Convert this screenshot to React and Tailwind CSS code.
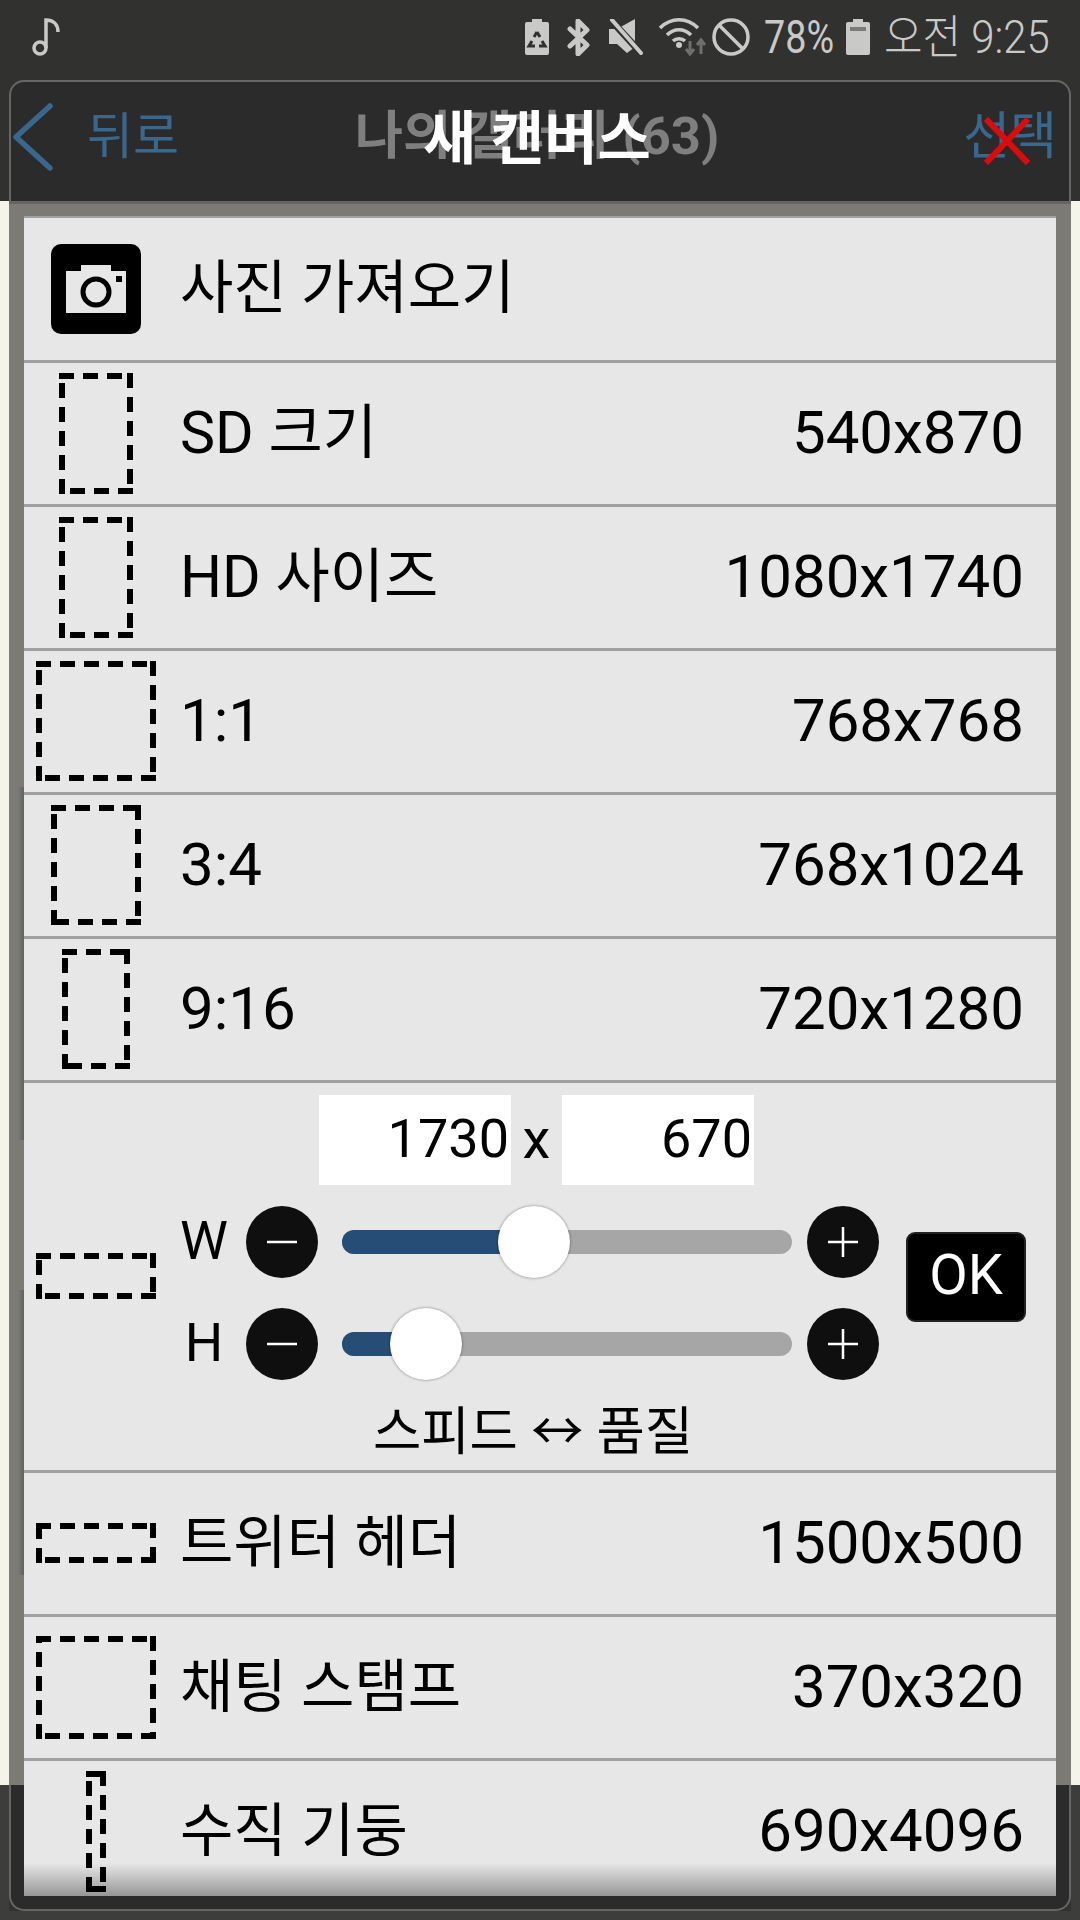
const rows = [
  { label: "SD 크기", size: "540x870", w: 74, h: 121, labelSize: "text-[59px]" },
  { label: "HD 사이즈", size: "1080x1740", w: 74, h: 121, labelSize: "text-[59px]" },
  { label: "1:1", size: "768x768", w: 120, h: 120, labelSize: "text-[60px]" },
  { label: "3:4", size: "768x1024", w: 90, h: 120, labelSize: "text-[60px]" },
  { label: "9:16", size: "720x1280", w: 68, h: 120, labelSize: "text-[60px]" },
];

const lowerRows = [
  { label: "트위터 헤더", size: "1500x500", w: 120, h: 40, labelSize: "text-[58px]" },
  { label: "채팅 스탬프", size: "370x320", w: 120, h: 103, labelSize: "text-[58px]" },
  { label: "수직 기둥", size: "690x4096", w: 20, h: 121, labelSize: "text-[58px]" },
];

// each side restarts its dashes from its own corner
function DashIcon({ w, h }) {
  return (
    <svg
      width={w}
      height={h}
      viewBox={`0 0 ${w} ${h}`}
      fill="none"
      stroke="#000"
      strokeWidth="6"
      strokeDasharray="15 9"
      shapeRendering="crispEdges"
      style={{ marginBottom: h % 2 === 0 ? 1 : 0 }}
    >
      <path d={`M0 3H${w}`} />
      <path d={`M${w - 3} 0V${h}`} />
      <path d={`M${w} ${h - 3}H0`} />
      <path d={`M3 ${h}V0`} />
    </svg>
  );
}

function CameraIcon() {
  return (
    <svg width="90" height="90" viewBox="0 0 90 90">
      <rect width="90" height="90" rx="10" fill="#000" />
      <path d="M15 27H30V21H60V27H75V69H15Z" fill="#e7e7e7" />
      <circle cx="45" cy="48" r="13" fill="none" stroke="#000" strokeWidth="5" />
      <rect x="65" y="32" width="6" height="6" fill="#000" />
    </svg>
  );
}

function SizeRow({ label, size, w, h, labelSize }) {
  return (
    <div className="flex h-[144px] shrink-0 items-center border-b-[3px] border-[#a1a1a1]">
      <div className="flex w-[144px] shrink-0 justify-center">
        <DashIcon w={w} h={h} />
      </div>
      <span className={`ml-[12px] pb-[2px] leading-none text-black ${labelSize}`}>{label}</span>
      <span className="ml-auto pb-[2px] pr-[32px] text-[60px] leading-none text-black">{size}</span>
    </div>
  );
}

function RoundButton({ plus }) {
  return (
    <div className="flex h-[72px] w-[72px] shrink-0 items-center justify-center rounded-full bg-[#0f0f0f]">
      <svg width="32" height="32" viewBox="0 0 32 32">
        <rect x="1" y="14.75" width="30" height="2.5" fill="#fff" />
        {plus && <rect x="14.75" y="1" width="2.5" height="30" fill="#fff" />}
      </svg>
    </div>
  );
}

function SliderRow({ name, value }) {
  return (
    <div className="flex h-[72px] items-center">
      <span className="w-[72px] pb-[2px] text-center text-[54px] leading-none text-black">{name}</span>
      <div className="ml-[6px]">
        <RoundButton />
      </div>
      <div className="relative ml-[24px] h-[24px] w-[450px] rounded-full bg-[#a6a6a6]">
        <div className="h-full rounded-l-full bg-[#264d75]" style={{ width: value }} />
        <div
          className="absolute top-[-24px] h-[72px] w-[72px] -translate-x-1/2 rounded-full bg-white shadow-[0_0_3px_rgba(0,0,0,0.45)]"
          style={{ left: value }}
        />
      </div>
      <div className="ml-[15px]">
        <RoundButton plus />
      </div>
    </div>
  );
}

function CustomRow() {
  return (
    <div className="flex h-[390px] shrink-0 items-center border-b-[3px] border-[#a1a1a1]">
      <div className="flex w-[144px] shrink-0 justify-center">
        <DashIcon w={120} h={46} />
      </div>
      <div className="flex w-[725px] shrink-0 flex-col self-start pt-[12px]">
        <div className="flex items-center pl-[151px]">
          <div className="flex h-[90px] w-[192px] items-center justify-end bg-white pb-[4px] pr-[2px] text-[54px] text-black">
            1730
          </div>
          <span className="w-[51px] pb-[2px] text-center text-[56px] leading-none text-black">x</span>
          <div className="flex h-[90px] w-[192px] items-center justify-end bg-white pb-[4px] pr-[2px] text-[54px] text-black">
            670
          </div>
        </div>
        <div className="mt-[21px] flex flex-col gap-[30px]">
          <SliderRow name="W" value={192} />
          <SliderRow name="H" value={84} />
        </div>
        <div className="mt-[22px] pl-[205px] text-[52.5px] leading-[60px] text-black">
          스피드 ↔ 품질
        </div>
      </div>
      <div className="ml-[13px] flex h-[90px] w-[120px] items-center justify-center rounded-[9px] border-2 border-[#222] bg-black pb-[3px] text-[56px] text-white">
        OK
      </div>
    </div>
  );
}

function StatusIcons() {
  return (
    <div className="flex items-center">
      <svg width="24" height="36" viewBox="0 0 24 36" fill="#c9c9c7">
        <path d="M7 0H17V3H22A2 2 0 0 1 24 5V34A2 2 0 0 1 22 36H2A2 2 0 0 1 0 34V5A2 2 0 0 1 2 3H7Z" />
        <path d="M12 13L9 18M12 13L15 18M7 22L4 27H10M17 22L20 27H14" stroke="#313130" strokeWidth="3" fill="none" />
      </svg>
      <svg className="ml-[18px]" width="24" height="37" viewBox="0 0 24 37" fill="none">
        <path d="M3 10L20 26L11 35V2L20 11L3 27" stroke="#c9c9c7" strokeWidth="5" strokeLinejoin="round" strokeLinecap="round" />
      </svg>
      <svg className="ml-[18px]" width="34" height="36" viewBox="0 0 34 36">
        <path d="M0 10H8L26 0V28L18 34L8 25H0Z" fill="#c9c9c7" />
        <path d="M0 -1L32 34" stroke="#313130" strokeWidth="7" />
        <path d="M3 1L32 34" stroke="#c9c9c7" strokeWidth="4" strokeLinecap="round" />
      </svg>
      <svg className="ml-[16px]" width="48" height="38" viewBox="0 0 48 38" fill="none">
        <path d="M1 10C12 -1 28 -1 39 10" stroke="#c9c9c7" strokeWidth="3.5" />
        <path d="M8 17C15 10 25 10 32 17" stroke="#c9c9c7" strokeWidth="3.5" />
        <path d="M14 23C17 20 23 20 26 23" stroke="#c9c9c7" strokeWidth="3.5" />
        <circle cx="20" cy="27" r="3" fill="#c9c9c7" />
        <path d="M31 23V35M27 31L31 36L35 31" stroke="#6f6f6e" strokeWidth="3" />
        <path d="M42 36V23M38 27L42 22L46 27" stroke="#6f6f6e" strokeWidth="3" />
      </svg>
      <svg className="ml-[5px]" width="38" height="38" viewBox="0 0 38 38" fill="none">
        <circle cx="19" cy="19" r="17" stroke="#c9c9c7" strokeWidth="3.5" />
        <path d="M7 7L31 31" stroke="#c9c9c7" strokeWidth="3.5" />
      </svg>
      <span className="ml-[14px] w-[69px] origin-left scale-x-[0.82] whitespace-nowrap text-[46px] leading-none text-[#c9c9c7]">
        78%
      </span>
      <svg className="ml-[13px]" width="24" height="36" viewBox="0 0 24 36">
        <path d="M7 0H17V3H22A2 2 0 0 1 24 5V34A2 2 0 0 1 22 36H2A2 2 0 0 1 0 34V5A2 2 0 0 1 2 3H7Z" fill="#c9c9c7" />
        <rect x="4" y="8" width="16" height="4" fill="#7a7a78" />
      </svg>
      <span className="ml-[14px] w-[164px] origin-left scale-x-[0.91] whitespace-nowrap text-[46px] font-light leading-none text-[#c9c9c7]">
        오전 9:25
      </span>
    </div>
  );
}

function FrameShadow({ h }) {
  return (
    <div className={`${h} bg-gradient-to-r from-[#7b7a75] from-60% to-[#62625f]`} />
  );
}

function Gutter({ side }) {
  const left = side === "left";
  return (
    <div className="flex w-[24px] shrink-0 flex-col">
      <div className={`flex h-[1584px] shrink-0 ${left ? "flex-row" : "flex-row-reverse"}`}>
        <div className="w-[9px] bg-[#f4f4ea]" />
        <div className="flex w-[15px] flex-col bg-[#7b7a75]">
          <div className="h-[3px] bg-[#666561]" />
          {left && <div className="h-[583px]" />}
          {left && <FrameShadow h="h-[353px]" />}
          {left && <div className="h-[150px]" />}
          {left && <FrameShadow h="h-[285px]" />}
        </div>
      </div>
      <div className={`flex flex-1 ${left ? "flex-row" : "flex-row-reverse"}`}>
        <div className="w-[9px] bg-[#3d3d3c]" />
        <div
          className={
            left
              ? "w-[15px] rounded-bl-[15px] border-l-2 border-b-2 border-[#666664] bg-[#2b2b2b]"
              : "w-[15px] rounded-br-[15px] border-r-2 border-b-2 border-[#666664] bg-[#2b2b2b]"
          }
        />
      </div>
    </div>
  );
}

export default function App() {
  return (
    <div className="flex h-[1920px] w-[1080px] flex-col overflow-hidden bg-[#313130] font-['Roboto','Noto_Sans_CJK_KR',sans-serif]">
      {/* STATUS BAR */}
      <div className="flex h-[80px] shrink-0 items-center justify-between pb-[6px] pl-[32px] pr-[32px]">
        <svg width="28" height="38" viewBox="0 0 28 38" fill="none">
          <circle cx="8" cy="30" r="6" stroke="#c9c9c7" strokeWidth="3.5" />
          <path d="M14 30V2C21 2 26 6 26 14" stroke="#c9c9c7" strokeWidth="3.5" />
        </svg>
        <StatusIcons />
      </div>

      {/* HEADER */}
      <div className="relative mx-[9px] flex h-[121px] shrink-0 items-center justify-between rounded-t-[15px] border-x-2 border-t-2 border-[#666664] bg-[#2b2b2b] pb-[10px]">
        <div className="flex items-center">
          <svg className="ml-[1px]" width="42" height="68" viewBox="0 0 42 68" fill="none">
            <path d="M38 3L4 34L38 65" stroke="#39688f" strokeWidth="5.5" strokeLinecap="round" strokeLinejoin="round" />
          </svg>
          <span className="ml-[33px] text-[50px] leading-none text-[#39688f]">뒤로</span>
        </div>
        <div className="absolute inset-0 flex items-center justify-center pb-[10px] pr-[6px] text-[52.5px] font-bold leading-none text-[#7f7f7f]">
          나의 갤러리 (63)
        </div>
        <div className="absolute inset-0 flex items-center justify-center pb-[6px] pr-[6px] text-[58px] font-bold leading-none text-white">
          새 캔버스
        </div>
        <div className="relative mr-[12px] text-[51px] leading-none text-[#39688f]">
          선택
          <svg className="absolute left-[20px] top-[6px]" width="48" height="48" viewBox="0 0 48 48" fill="none">
            <path d="M3 2L45 46M45 2L3 46" stroke="#dd0b0b" strokeWidth="6" />
          </svg>
        </div>
      </div>

      {/* BODY */}
      <div className="flex h-[1710px] shrink-0">
        <Gutter side="left" />
        <div className="flex w-[1032px] shrink-0 flex-col">
          <div className="h-[3px] shrink-0 bg-[#666561]" />
          <div className="h-[12px] shrink-0 bg-[#7b7a75]" />
          <div className="h-[2px] shrink-0 bg-[#a1a1a1]" />
          <div className="relative flex h-[1678px] shrink-0 flex-col overflow-hidden bg-[#e7e7e7]">
            <div className="flex h-[145px] shrink-0 items-center border-b-[3px] border-[#a1a1a1]">
              <div className="flex w-[144px] shrink-0 justify-center">
                <CameraIcon />
              </div>
              <span className="ml-[12px] pb-[2px] text-[58px] leading-none text-black">사진 가져오기</span>
            </div>
            {rows.map((row) => (
              <SizeRow key={row.label} {...row} />
            ))}
            <CustomRow />
            {lowerRows.map((row) => (
              <SizeRow key={row.label} {...row} />
            ))}
            {/* bottom fade */}
            <div className="absolute inset-x-0 bottom-0 h-[33px] bg-gradient-to-b from-black/0 to-black/35" />
          </div>
          <div className="h-[15px] shrink-0 border-b-2 border-[#666664] bg-[#2b2b2b]" />
        </div>
        <Gutter side="right" />
      </div>
      <div className="flex-1 bg-[#3d3d3c]" />
    </div>
  );
}
